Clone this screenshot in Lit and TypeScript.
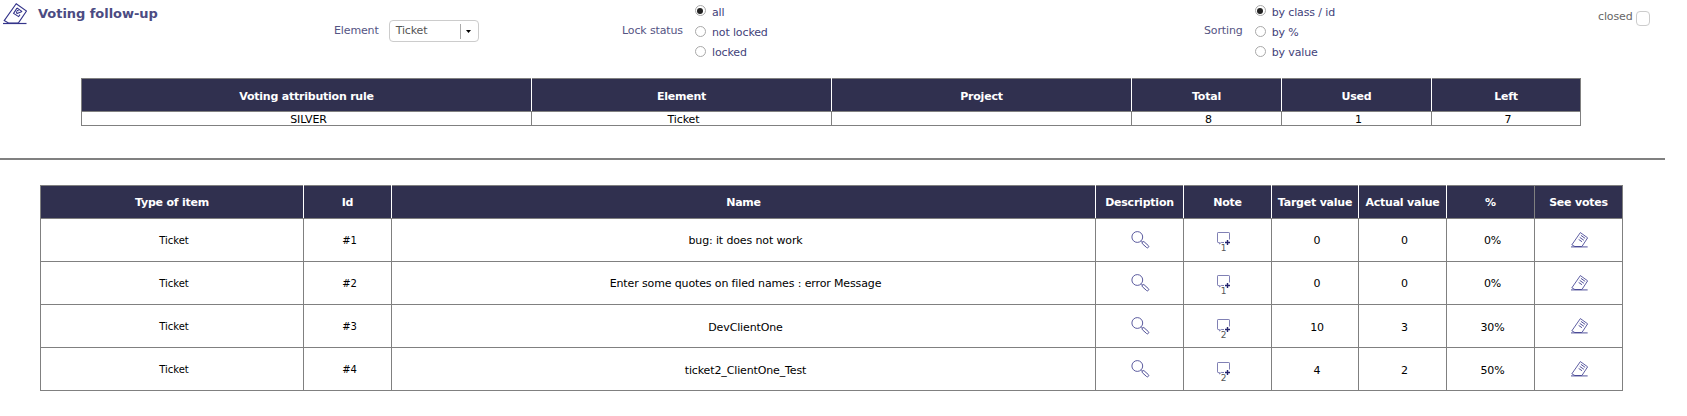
import { LitElement, html, svg, css } from "lit";
import { customElement, property } from "lit/decorators.js";

const ballot = (detail: unknown) => svg`
  <path d="M13.2 .8 L23.5 8 L15.8 19.4 Q15.3 20 14.5 20 H5.5 L1.2 17.6 Z" fill="none" stroke="#34348a" stroke-width="1.1"/>
  <path d="M0 20.5 H23.5" stroke="#34348a" stroke-width="1.2"/>${detail}`;

const bigBallot = html`<svg width="24" height="22" viewBox="0 0 24 22">${ballot(svg`
  <path d="M14 5 L19.2 8.6 M14 5 L10.6 10.4 L15.6 13.6 L17 11.6 M13.2 8.4 L14 10.6 L18.6 8.8 M13.8 7.6 L15.6 7.6" fill="none" stroke="#34348a" stroke-width="1.1"/>`)}</svg>`;

const smallBallot = html`<svg width="17" height="16" viewBox="0 0 24 22" preserveAspectRatio="none">${ballot(svg`
  <path d="M14 4.6 L20 8.8 M12.3 7.4 L18.2 11.4 M10.8 10.2 L15.6 13.4" fill="none" stroke="#34348a" stroke-width="1.2"/>`)}</svg>`;

const magnifier = html`<svg width="19" height="18" viewBox="0 0 19 18" fill="none" stroke="#4a4a94" stroke-width=".9">
  <circle cx="6.3" cy="6" r="5.4"/><path d="M10.2 9.8 L11.7 11.3"/>
  <rect x="-1.3" y="0" width="2.6" height="8" rx="1.2" transform="translate(11.4 11) rotate(-48)"/></svg>`;

const bubble = html`<svg width="14" height="13" viewBox="0 0 14 13" fill="none">
  <path d="M12.5 7.5 V1.1 Q12.5 .5 11.9 .5 H1.1 Q.5 .5 .5 1.1 V9.9 Q.5 10.5 1.1 10.5 H2.4 V12 L4.2 10.5 H7" stroke="#8080b4" stroke-width="1"/>
  <path d="M10.5 8 V13 M8 10.5 H13" stroke="#24246e" stroke-width="1.4"/></svg>`;

@customElement("radio-group")
class RadioGroup extends LitElement {
  @property() label = "";
  @property({ type: Array }) options: string[] = [];
  static styles = css`
    :host { display: flex; color: #42427a; }
    .label { height: 14px; margin-top: 19px; margin-right: 12px; line-height: 14px; color: #545483; }
    .options { display: flex; flex-direction: column; }
    .option { display: flex; height: 20.5px; align-items: flex-start; line-height: 14px; }
    .option:first-child .text { margin-top: 1px; }
    .radio { box-sizing: border-box; width: 11px; height: 11px; margin-right: 6px; border: 1px solid #a9a9a9; border-radius: 50%; background: #fff; display: flex; align-items: center; justify-content: center; }
    .dot { width: 6px; height: 6px; border-radius: 50%; background: #222; }
  `;
  render() {
    return html`<span class="label">${this.label}</span>
      <div class="options">${this.options.map((o, i) => html`
        <div class="option"><span class="radio">${i === 0 ? html`<span class="dot"></span>` : ""}</span><span class="text">${o}</span></div>`)}
      </div>`;
  }
}

const rows = [
  ["#1", "bug: it does not work", "1", "0", "0", "0%"],
  ["#2", "Enter some quotes on filed names : error Message", "1", "0", "0", "0%"],
  ["#3", "DevClientOne", "2", "10", "3", "30%"],
  ["#4", "ticket2_ClientOne_Test", "2", "4", "2", "50%"],
];

@customElement("app-root")
class AppRoot extends LitElement {
  static styles = css`
    :host { display: block; height: 416px; overflow: hidden; background: #fff; color: #000; font: 11px/14px Verdana, "DejaVu Sans", sans-serif; letter-spacing: -0.13px; white-space: nowrap; }
    svg { display: block; }
    .top { display: grid; grid-template-columns: 334px 288px 582px 394px 1fr; height: 78px; align-items: start; }
    .title { display: flex; padding: 3px 0 0 3px; gap: 11px; font-size: 13px; font-weight: bold; line-height: 21px; letter-spacing: -0.04px; color: #4b4b82; }
    .element { display: flex; align-items: center; gap: 10px; padding-top: 20px; color: #545483; }
    .select { box-sizing: border-box; display: flex; align-items: center; width: 90px; height: 22px; border: 1px solid #ccc; border-radius: 4px; padding-left: 6px; color: #555; }
    .value { width: 64px; }
    .arrow { display: flex; align-items: center; height: 15px; border-left: 1px solid #aaa; padding-left: 5px; }
    .group { padding-top: 5px; }
    .closed { display: flex; gap: 3px; padding-top: 11px; color: #666; }
    .closed .text { margin-top: -1px; }
    .box { box-sizing: border-box; width: 14px; height: 15px; border: 1px solid #ccc; border-radius: 4px; }
    .table { border: 1px solid #808080; border-top: 0; box-sizing: border-box; }
    .rules { width: 1500px; margin-left: 81px; }
    .items { width: 1583px; margin-left: 40px; }
    .row { display: grid; column-gap: 1px; background: #808080; border-top: 1px solid #808080; }
    .rules .row { grid-template-columns: 449px 299px 299px 149px 149px 1fr; }
    .items .row { grid-template-columns: 262px 87px 703px 87px 87px 86px 87px 87px 1fr; }
    .cell { box-sizing: border-box; display: flex; align-items: center; justify-content: center; background: #fff; }
    .row.head { border-top: 0; background: #fff; }
    .head .cell { height: 33px; border-top: 1px solid #808080; padding: 1px 0 0; background: #30304f; color: #fff; font-weight: bold; letter-spacing: -0.22px; }
    .rules .head .cell { padding-top: 3px; }
    .head .gray { border-right: 1px solid #808080; margin-right: -1px; }
    .rules .body .cell { height: 13px; padding: 3px 0 0 4px; }
    .items .body .cell { height: 42px; padding: 1px 0 0 4px; }
    .items .body.low .cell:not(.icon):not(.small) { padding-top: 3px; }
    .items .body .small { font-size: 10px; letter-spacing: 0; }
    .items .body .icon { padding: 0 0 0 1px; }
    .note { display: flex; flex-direction: column; align-items: center; padding: 3px 9px 0 0; }
    .low .note { padding-top: 5px; }
    .count { font-size: 9px; line-height: 7px; color: #555; }
    .rule { width: 1665px; height: 2px; margin: 32px 0 25px; background: #808080; }
  `;
  render() {
    return html`
      <div class="top">
        <div class="title">${bigBallot}<span>Voting follow-up</span></div>
        <div class="element"><span>Element</span>
          <div class="select"><span class="value">Ticket</span>
            <span class="arrow"><svg width="5" height="3"><path d="M0 0H5L2.5 3Z"/></svg></span></div>
        </div>
        <radio-group class="group" label="Lock status" .options=${["all", "not locked", "locked"]}></radio-group>
        <radio-group class="group" label="Sorting" .options=${["by class / id", "by %", "by value"]}></radio-group>
        <div class="closed"><span class="text">closed</span><span class="box"></span></div>
      </div>
      <div class="table rules">
        <div class="row head">${["Voting attribution rule", "Element", "Project", "Total", "Used", "Left"].map((t) => html`<div class="cell">${t}</div>`)}</div>
        <div class="row body">${["SILVER", "Ticket", "", "8", "1", "7"].map((t) => html`<div class="cell">${t}</div>`)}</div>
      </div>
      <div class="rule"></div>
      <div class="table items">
        <div class="row head">${["Type of item", "Id", "Name", "Description", "Note", "Target value", "Actual value", "%", "See votes"].map((t) => html`<div class="cell ${t === "%" ? "gray" : ""}">${t}</div>`)}</div>
        ${rows.map(([id, name, notes, target, actual, pct], i) => html`
          <div class="row body ${i > 1 ? "low" : ""}">
            <div class="cell small">Ticket</div><div class="cell small">${id}</div><div class="cell">${name}</div>
            <div class="cell icon">${magnifier}</div>
            <div class="cell icon"><div class="note">${bubble}<span class="count">${notes}</span></div></div>
            <div class="cell">${target}</div><div class="cell">${actual}</div><div class="cell">${pct}</div>
            <div class="cell icon">${smallBallot}</div>
          </div>`)}
      </div>`;
  }
}
